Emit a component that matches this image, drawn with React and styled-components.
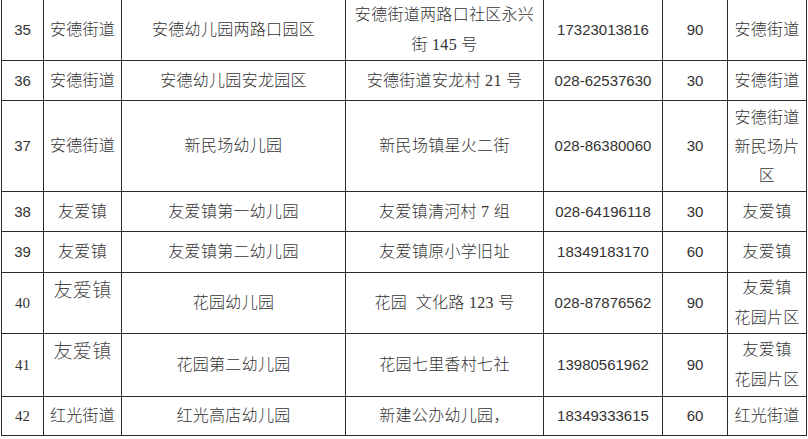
import React from "react";
import styled, { createGlobalStyle } from "styled-components";

const GlobalStyle = createGlobalStyle`
  html, body {
    margin: 0;
    padding: 0;
    background: #ffffff;
  }
  body {
    font-family: "Liberation Sans", "Noto Sans CJK SC", sans-serif;
    color: #2e2e2e;
  }
`;

const COLUMNS = [43, 78, 224, 198, 119, 65, 79];

const SANS = `"Liberation Sans", "Noto Sans CJK SC", sans-serif`;
const SERIF = `"Liberation Serif", "Noto Sans CJK SC", serif`;

const rows = [
  {
    height: 61,
    no: "35",
    street: "安德街道",
    name: "安德幼儿园两路口园区",
    addr: ["安德街道两路口社区永兴", "街 145 号"],
    phone: "17323013816",
    cap: "90",
    area: ["安德街道"],
  },
  {
    height: 40,
    no: "36",
    street: "安德街道",
    name: "安德幼儿园安龙园区",
    addr: ["安德街道安龙村 21 号"],
    phone: "028-62537630",
    cap: "30",
    area: ["安德街道"],
  },
  {
    height: 91,
    no: "37",
    street: "安德街道",
    name: "新民场幼儿园",
    addr: ["新民场镇星火二街"],
    phone: "028-86380060",
    cap: "30",
    area: ["安德街道", "新民场片", "区"],
  },
  {
    height: 40,
    no: "38",
    street: "友爱镇",
    name: "友爱镇第一幼儿园",
    addr: ["友爱镇清河村 7 组"],
    phone: "028-64196118",
    cap: "30",
    area: ["友爱镇"],
  },
  {
    height: 41,
    no: "39",
    street: "友爱镇",
    name: "友爱镇第二幼儿园",
    addr: ["友爱镇原小学旧址"],
    phone: "18349183170",
    cap: "60",
    area: ["友爱镇"],
  },
  {
    height: 61,
    no: "40",
    serifNo: true,
    street: "友爱镇",
    bigStreet: true,
    name: "花园幼儿园",
    addr: ["花园\u00a0\u00a0文化路 123 号"],
    phone: "028-87876562",
    cap: "90",
    area: ["友爱镇", "花园片区"],
  },
  {
    height: 63,
    no: "41",
    serifNo: true,
    street: "友爱镇",
    bigStreet: true,
    name: "花园第二幼儿园",
    addr: ["花园七里香村七社"],
    phone: "13980561962",
    cap: "90",
    area: ["友爱镇", "花园片区"],
  },
  {
    height: 39,
    no: "42",
    serifNo: true,
    street: "红光街道",
    name: "红光高店幼儿园",
    addr: ["新建公办幼儿园，"],
    phone: "18349333615",
    cap: "60",
    area: ["红光街道"],
  },
];

const Page = styled.div`
  width: 808px;
  height: 439px;
  overflow: hidden;
  background: #ffffff;
`;

const Grid = styled.div`
  display: grid;
  grid-template-columns: ${COLUMNS.map((w) => `${w}px`).join(" ")};
  grid-template-rows: ${rows.map((r) => `${r.height}px`).join(" ")};
  margin-left: 1px;
`;

const Cell = styled.div`
  box-sizing: border-box;
  display: flex;
  flex-direction: column;
  align-items: center;
  justify-content: ${(p) => (p.$top ? "flex-start" : "center")};
  padding-top: ${(p) => (p.$top ? "6px" : "0")};
  border-right: 1px solid #2b2b2b;
  border-bottom: 1px solid #2b2b2b;
  border-left: ${(p) => (p.$first ? "1px solid #2b2b2b" : "none")};
  text-align: center;
  font-family: ${(p) => (p.$serif ? SERIF : SANS)};
  font-size: ${(p) => p.$size || 16}px;
  font-weight: 300;
  letter-spacing: ${(p) => (p.$size && p.$size < 16 ? "0" : "0.3px")};
  line-height: ${(p) => p.$lh || 30}px;
  color: ${(p) => (p.$soft ? "#4a4a4a" : "#333333")};
  white-space: nowrap;
`;

const Line = styled.span`
  display: block;
`;

function Lines({ items }) {
  return items.map((t, i) => <Line key={i}>{t}</Line>);
}

export default function App() {
  return (
    <Page>
      <GlobalStyle />
      <Grid>
        {rows.map((r) => (
          <React.Fragment key={r.no}>
            <Cell $first $size={15} $serif={r.serifNo}>
              {r.no}
            </Cell>
            <Cell
              $top={r.bigStreet}
              $size={r.bigStreet ? 19 : 16}
              $soft={r.bigStreet}
              $lh={r.bigStreet ? 24 : 30}
            >
              {r.street}
            </Cell>
            <Cell>{r.name}</Cell>
            <Cell $serif>
              <Lines items={r.addr} />
            </Cell>
            <Cell $size={15}>{r.phone}</Cell>
            <Cell $size={15}>{r.cap}</Cell>
            <Cell $lh={r.area.length > 2 ? 29 : 30}>
              <Lines items={r.area} />
            </Cell>
          </React.Fragment>
        ))}
      </Grid>
    </Page>
  );
}
